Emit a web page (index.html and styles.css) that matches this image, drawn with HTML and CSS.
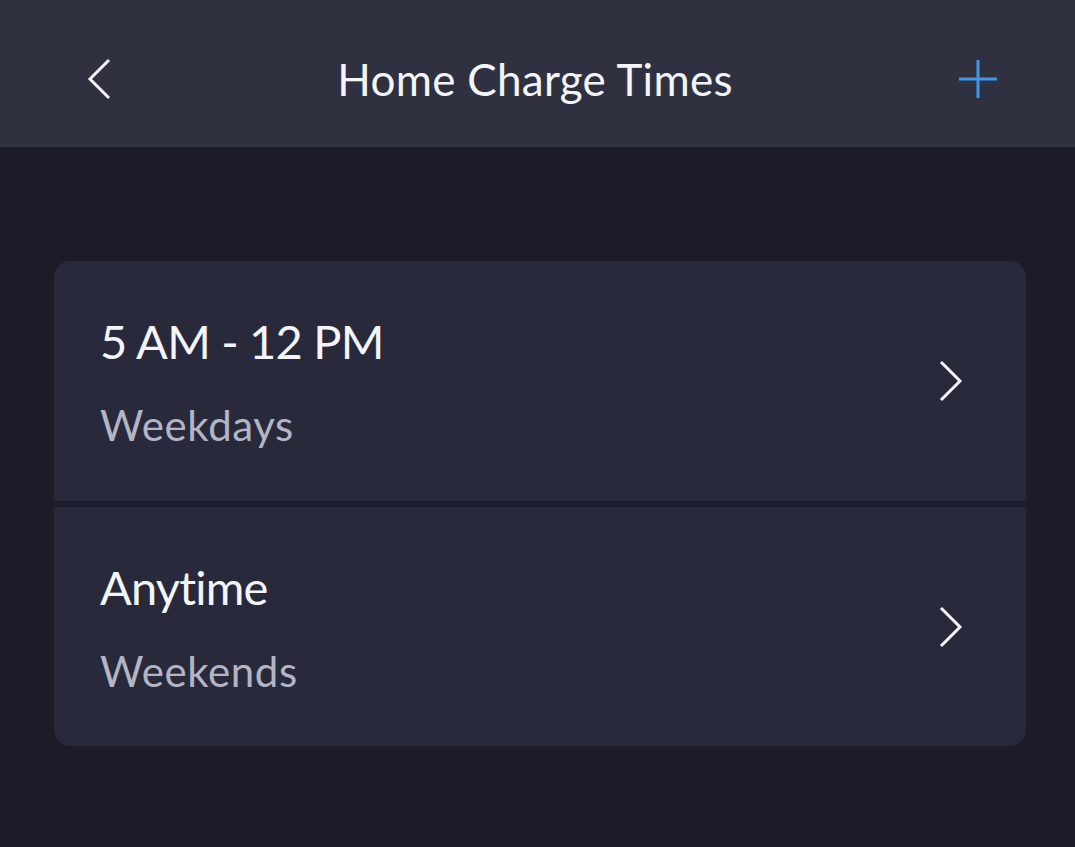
FILE: index.html
```html
<!DOCTYPE html>
<html lang="en">
<head>
<meta charset="UTF-8">
<meta name="viewport" content="width=device-width, initial-scale=1.0">
<title>Home Charge Times</title>
<link rel="stylesheet" href="styles.css">
</head>
<body>

<header class="top-bar">
    <button class="icon-btn back" aria-label="Back">
        <svg width="24" height="42" viewBox="0 0 24 42"><polyline points="22,2 3,21 22,40" fill="none" stroke="#f2f3f8" stroke-width="3"/></svg>
    </button>
    <h1>Home Charge Times</h1>
    <button class="icon-btn add" aria-label="Add">
        <svg width="38" height="38" viewBox="0 0 38 38"><path d="M19 0V38M0 19H38" stroke="#3c99e8" stroke-width="3"/></svg>
    </button>
</header>

<main class="content">
    <div class="card">
        <div class="row">
            <div class="row-text">
                <div class="row-title">5 AM - 12 PM</div>
                <div class="row-sub">Weekdays</div>
            </div>
            <svg class="chevron" width="24" height="42" viewBox="0 0 24 42"><polyline points="2,2 21,21 2,40" fill="none" stroke="#f2f3f8" stroke-width="3"/></svg>
        </div>
        <div class="row">
            <div class="row-text">
                <div class="row-title">Anytime</div>
                <div class="row-sub">Weekends</div>
            </div>
            <svg class="chevron" width="24" height="42" viewBox="0 0 24 42"><polyline points="2,2 21,21 2,40" fill="none" stroke="#f2f3f8" stroke-width="3"/></svg>
        </div>
    </div>
</main>

</body>
</html>
```

FILE: styles.css
```css
body {
    margin: 0;
    padding: 0;
    background-color: #1b1c27;
    font-family: Lato, "Noto Sans", sans-serif;
    color: #f4f5fa;
    height: 847px;
    overflow: hidden;
}
.top-bar {
    height: 147px;
    box-sizing: border-box;
    background-color: #2f3141;
    border-bottom: 1px solid #34364a;
    display: flex;
    align-items: center;
    justify-content: space-between;
    padding: 12px 78px 0 87px;
}
.top-bar h1 {
    margin: 0;
    font-size: 44px;
    font-weight: 400;
    letter-spacing: 0.3px;
    color: #f4f5fa;
}
.icon-btn {
    background: none;
    border: none;
    padding: 0;
    display: flex;
}
.content {
    padding: 114px 49px 0 54px;
}
.card {
    background-color: #1c1e29;
    border-radius: 16px;
    overflow: hidden;
    display: flex;
    flex-direction: column;
    gap: 6px;
}
.row {
    background-color: #282a3b;
    height: 240px;
    display: flex;
    align-items: center;
    justify-content: space-between;
    padding: 0 63px 0 46px;
}
.row:last-child {
    height: 239px;
}
.row-title {
    font-size: 47px;
    line-height: 56px;
    letter-spacing: -0.8px;
    color: #f4f5fa;
}
.row-sub {
    font-size: 42px;
    line-height: 48px;
    letter-spacing: 0.6px;
    margin-top: 32px;
    color: #b3b5c4;
}
```
